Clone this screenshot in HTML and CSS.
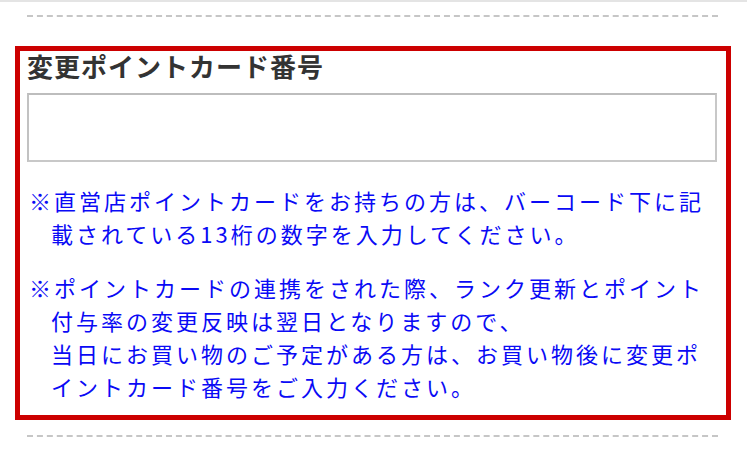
FILE: index.html
```html
<!DOCTYPE html>
<html lang="ja">
<head>
<meta charset="utf-8">
<title>変更ポイントカード番号</title>
<link rel="stylesheet" href="styles.css">
</head>
<body>
<div class="topline"></div>
<div class="page">
  <div class="divider"></div>
  <section class="card-box">
    <h2 class="card-title">変更ポイントカード番号</h2>
    <input class="card-input" type="text" aria-label="変更ポイントカード番号">
    <p class="note">※直営店ポイントカードをお持ちの方は、バーコード下に記<br>載されている13桁の数字を入力してください。</p>
    <p class="note note-second">※ポイントカードの連携をされた際、ランク更新とポイント<br>付与率の変更反映は翌日となりますので、<br>当日にお買い物のご予定がある方は、お買い物後に変更ポ<br>イントカード番号をご入力ください。</p>
  </section>
  <div class="divider divider-bottom"></div>
</div>
</body>
</html>
```

FILE: styles.css
```css
html, body {
  margin: 0;
  padding: 0;
  background: #ffffff;
}

body {
  font-family: "Noto Sans CJK JP", "Noto Sans", sans-serif;
  width: 747px;
  height: 453px;
  overflow: hidden;
}

.topline {
  height: 2px;
  background: #e4e4e4;
}

.page {
  padding: 13px 29px 0 27px;
}

.divider {
  border-top: 2px dashed #c6c6c6;
}

.divider-bottom {
  margin-top: 15px;
}

.card-box {
  margin: 29px -13px 0 -12px;
  border: 5px solid #cc0000;
  padding: 0 9px 12px 7px;
}

.card-title {
  margin: 0;
  font-size: 26px;
  line-height: 30px;
  font-weight: 700;
  letter-spacing: 1px;
  color: #333333;
}

.card-input {
  display: block;
  box-sizing: border-box;
  width: 100%;
  height: 69px;
  margin: 12px 0 0;
  padding: 0 10px;
  border: 2px solid #c8c8c8;
  border-top-color: #bdbdbd;
  border-left-color: #c2c2c2;
  background: #ffffff;
  font-family: inherit;
  font-size: 22px;
  outline: none;
}

.note {
  margin: 22px 0 0 2px;
  padding-left: 22px;
  text-indent: -22px;
  font-size: 22px;
  font-weight: 400;
  line-height: 33px;
  letter-spacing: 3px;
  color: #0a0af5;
  white-space: nowrap;
}

.note-second {
  margin-top: 21px;
}
```
